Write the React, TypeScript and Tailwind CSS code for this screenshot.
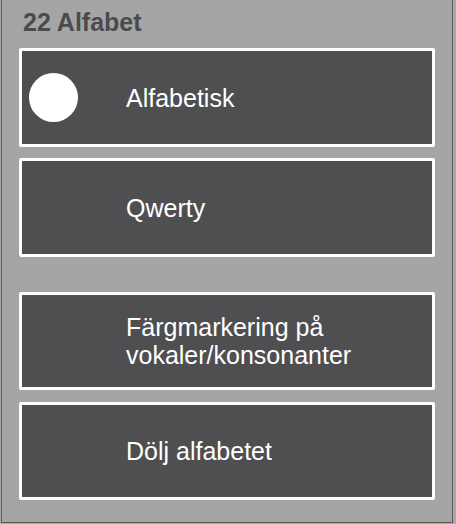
const options = [
  { label: "Alfabetisk", selected: true, height: "h-[99px]", gap: "" },
  { label: "Qwerty", selected: false, height: "h-[99px]", gap: "mt-[11px]" },
  {
    label: "Färgmarkering på vokaler/konsonanter",
    selected: false,
    height: "h-[98px]",
    gap: "mt-[35px]",
  },
  { label: "Dölj alfabetet", selected: false, height: "h-[98px]", gap: "mt-[12px]" },
];

export default function App() {
  return (
    <div className="h-[524px] w-[456px] bg-[#a8a8a8] font-['Liberation_Sans',Arial,sans-serif]">
      <div className="ml-px h-[523px] w-[452px] border-x border-b border-[#5c5c5c] bg-[#a5a5a5] pl-[17px] pt-[8px]">
        <h1 className="pl-[4px] text-[25px] font-bold leading-[28px] text-[#4b4b4d]">
          22 Alfabet
        </h1>
        <div className="mt-[12px] flex flex-col">
          {options.map((option) => (
            <button
              className={`${option.gap} ${option.height} flex w-[416px] items-center rounded-[2px] border-[3px] border-white bg-[#4f4f51] text-left`}
              key={option.label}
              type="button"
            >
              <span className="flex w-[104px] shrink-0 items-center">
                {option.selected ? (
                  <span className="ml-[7px] block h-[49px] w-[49px] rounded-full bg-white" />
                ) : null}
              </span>
              <span className="max-w-[240px] text-[25px] leading-[28px] text-white">
                {option.label}
              </span>
            </button>
          ))}
        </div>
      </div>
    </div>
  );
}
